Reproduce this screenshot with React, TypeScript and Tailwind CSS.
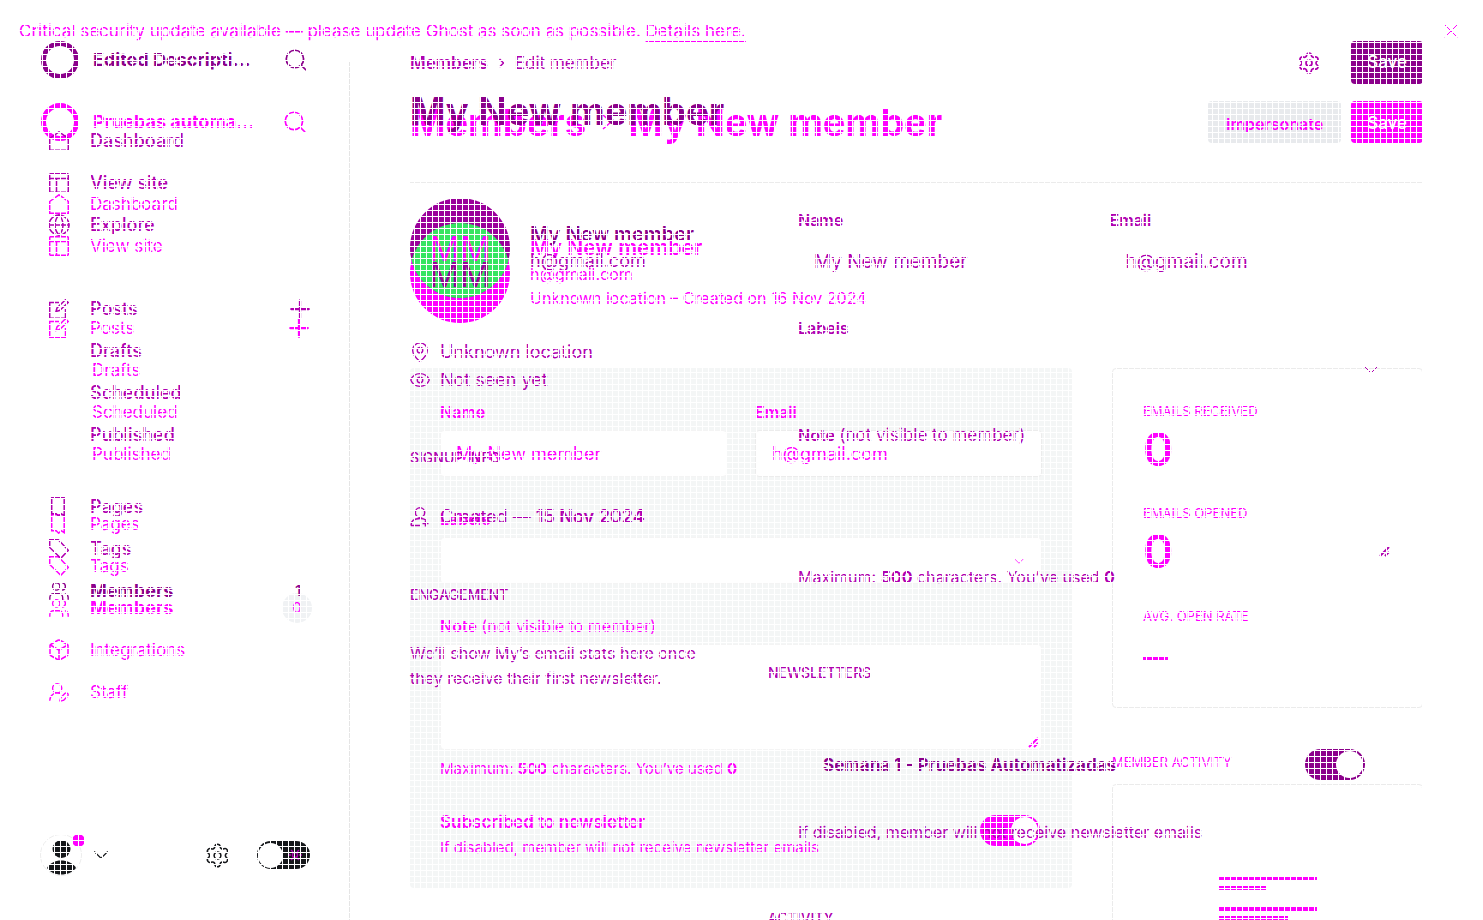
import React from "react";
import {
  Box,
  ChevronDown,
  Eye,
  Globe,
  MapPin,
  Plus,
  Search,
  Settings,
  UserRoundPen,
  Users,
  X,
} from "lucide-react";

const STROKE = 1.5;

function Glyph({ children }: { children: React.ReactNode }) {
  return (
    <svg
      viewBox="0 0 20 20"
      className="size-5 shrink-0"
      fill="none"
      stroke="currentColor"
      strokeWidth="1.5"
      aria-hidden="true"
    >
      {children}
    </svg>
  );
}

const HomeIcon = () => (
  <Glyph>
    <path d="M.7 7.5 10 .8l9.3 6.7v11.8H.7z" />
  </Glyph>
);
const SiteIcon = () => (
  <Glyph>
    <rect x=".7" y=".7" width="18.6" height="18.6" rx="1" />
    <path d="M.7 5.5h18.6M7.5 5.5v13.8" />
  </Glyph>
);
const PostIcon = () => (
  <Glyph>
    <path d="M10 3.500H.700v15.800h15.800V10" />
    <path d="m7 12.500 1-3.500L16.500.800l2.700 2.700-8.700 8z" />
  </Glyph>
);
const PageIcon = () => (
  <Glyph>
    <path d="M2.700.700h12.500v18l-3-2-2.500 2.500-2.500-2.500h-4.500z" />
  </Glyph>
);
const TagIcon = () => (
  <Glyph>
    <path d="M.7.7h8.600l10 10.600-7.500 8L.7 8.500z" />
  </Glyph>
);
const JoinedIcon = () => (
  <Glyph>
    <circle cx="10" cy="5.500" r="4.700" />
    <path d="M1 18.500c0-4.500 3.500-7 9-7 2.500 0 4.500.500 6 1.500M1 18.500h9M15.500 13.500v6M12.500 16.500h6" />
  </Glyph>
);

type Entry = { label: string; icon?: React.ReactNode; plus?: boolean; count?: string };

const postsGroup: Entry[] = [
  { label: "Posts", icon: <PostIcon />, plus: true },
  { label: "Drafts" },
  { label: "Scheduled" },
  { label: "Published" },
];

function NavRow({ entry, heavy, indent }: { entry: Entry; heavy: boolean; indent: string }) {
  const active = entry.label === "Members";
  const weight = active ? "font-bold text-[18px]" : heavy ? "font-medium" : "font-normal";
  return (
    <li className={`flex h-[42px] items-center ${active && heavy ? "text-[#8b008b]" : ""}`}>
      <span className="flex w-[41px] shrink-0">{entry.icon}</span>
      <a href="#" className={`${weight} ${entry.icon ? "" : indent}`}>
        {entry.label}
      </a>
      {entry.plus && (
        <button aria-label="New post" className="ml-auto mr-[-2px]">
          <Plus size={30} strokeWidth={1.8} />
        </button>
      )}
      {entry.count && (
        <span
          className={`ml-auto flex size-[30px] items-center justify-center rounded-full text-[15px] ${
            heavy ? "font-medium" : "bg-[#f0f2f4]"
          }`}
        >
          {entry.count}
        </span>
      )}
    </li>
  );
}

function NavGroup({
  entries,
  heavy = false,
  className = "",
  indent = "",
}: {
  entries: Entry[];
  heavy?: boolean;
  className?: string;
  indent?: string;
}) {
  return (
    <ul className={`pl-[49px] pr-[37px] leading-[24px] ${heavy ? "text-[18px]" : "text-[17px]"} ${className}`}>
      {entries.map((e) => (
        <NavRow key={e.label} entry={e} heavy={heavy} indent={indent} />
      ))}
    </ul>
  );
}

function SiteHeader({ name }: { name: string }) {
  return (
    <div className="flex h-[38px] items-center pl-[41px] pr-[41px]">
      <svg viewBox="0 0 38 38" className="size-[38px] shrink-0" fill="none" aria-hidden="true">
        <circle cx="19" cy="19" r="16.500" stroke="currentColor" strokeWidth="5" />
      </svg>
      <span className="ml-[14px] w-[164px] truncate text-[18px] font-bold leading-[28px]">{name}</span>
      <button aria-label="Search" className="ml-auto">
        <Search size={26} strokeWidth={1.6} />
      </button>
    </div>
  );
}

function Toggle({ id, className }: { id: string; className: string }) {
  return (
    <input
      id={id}
      type="checkbox"
      defaultChecked
      className={`block h-[31px] w-[60px] shrink-0 appearance-none rounded-full p-[2px] before:ml-auto before:block before:size-[27px] before:rounded-full before:bg-white before:content-[''] ${className}`}
    />
  );
}

function Handle() {
  return (
    <svg
      viewBox="0 0 12 12"
      className="mb-[2px] mr-[2px] size-3 self-end justify-self-end [grid-area:1/1]"
      stroke="currentColor"
      strokeWidth="2"
      aria-hidden="true"
    >
      <path d="M1 11 10 2M6 11l4-4" />
    </svg>
  );
}

function BasePage() {
  return (
    <div className="flex flex-col text-[#ff00ff] [grid-area:1/1]">
      <div className="flex h-[62px] items-center justify-between pl-[19px] pr-[20px]">
        <p className="text-[17px] leading-[24px]">
          Critical security update available — please update Ghost as soon as possible.{" "}
          <a href="#" className="underline underline-offset-4">
            Details here.
          </a>
        </p>
        <button aria-label="Close">
          <X size={24} strokeWidth={1} />
        </button>
      </div>
      <div className="flex grow">
        <nav className="w-[350px] shrink-0 border-r border-[#e5e5e5] pt-[41px]">
          <SiteHeader name="Pruebas automatizadas" />
          <NavGroup
            className="mt-[42px]"
            entries={[
              { label: "Dashboard", icon: <HomeIcon /> },
              { label: "View site", icon: <SiteIcon /> },
            ]}
          />
          <NavGroup className="mt-[40px]" indent="pl-[2px]" entries={postsGroup} />
          <NavGroup
            className="mt-[28px]"
            entries={[
              { label: "Pages", icon: <PageIcon /> },
              { label: "Tags", icon: <TagIcon /> },
              { label: "Members", icon: <Users size={22} strokeWidth={STROKE} className="-ml-px" />, count: "0" },
              { label: "Integrations", icon: <Box size={24} strokeWidth={STROKE} className="-ml-[2px]" /> },
              { label: "Staff", icon: <UserRoundPen size={22} strokeWidth={STROKE} className="-ml-px" /> },
            ]}
          />
        </nav>
        <main className="min-w-0 grow px-[60px]">
          <header className="flex items-center border-b border-[#ebebeb] py-[39px]">
            <h1 className="flex items-center gap-[16px] text-[38px] font-bold leading-[42px]">
              Members
              <svg viewBox="0 0 10 16" className="h-4 w-[10px]" fill="none" stroke="currentColor" aria-hidden="true">
                <path d="m1 1 8 7-8 7" strokeWidth="1.5" />
              </svg>
              My New member
            </h1>
            <button className="ml-auto h-[42px] rounded-[4px] bg-[#e8eaed] px-[18px] pt-[3px] text-[16px] font-semibold">
              Impersonate
            </button>
            <button className="ml-[10px] h-[42px] rounded-[4px] bg-[#ff00ff] px-4 pt-[3px] text-[17px] font-medium text-white">
              Save
            </button>
          </header>
          <div className="mt-[40px] flex gap-[20px]">
            <div className="size-[100px] rounded-full bg-[#ff00ff]" />
            <div className="pt-[11px]">
              <h2 className="text-[21px] font-semibold leading-[28px]">My New member</h2>
              <p className="text-[16px] leading-[24px]">h@gmail.com</p>
              <p className="text-[16px] leading-[24px]">Unknown location – Created on 16 Nov 2024</p>
            </div>
          </div>
          <div className="mt-[45px] grid grid-cols-[1fr_311px] items-start gap-[40px]">
            <form className="rounded-[4px] bg-[#f4f6f6] px-[30px] pb-[28px] pt-[32px] text-[16px] leading-[24px]">
              <div className="grid grid-cols-2 gap-[28px]">
                <div>
                  <label htmlFor="name" className="block font-semibold">
                    Name
                  </label>
                  <input
                    id="name"
                    defaultValue="My New member"
                    className="mt-[6px] h-[47px] w-full rounded-[4px] border border-[#f4f4f4] bg-white px-[15px] text-[18px]"
                  />
                </div>
                <div>
                  <label htmlFor="email" className="block font-semibold">
                    Email
                  </label>
                  <input
                    id="email"
                    defaultValue="h@gmail.com"
                    className="mt-[6px] h-[47px] w-full rounded-[4px] border border-[#ececec] bg-white px-[16px] text-[18px]"
                  />
                </div>
              </div>
              <label htmlFor="labels" className="mt-[30px] block font-semibold">
                Labels
              </label>
              <div className="mt-[6px] grid">
                <input
                  id="labels"
                  className="h-[47px] w-full rounded-[4px] border border-[#f4f4f4] bg-white px-[15px] text-[18px] [grid-area:1/1]"
                />
                <ChevronDown size={18} strokeWidth={1} className="mr-[14px] self-center justify-self-end [grid-area:1/1]" />
              </div>
              <label htmlFor="note" className="mt-[30px] block">
                <span className="font-semibold">Note</span> (not visible to member)
              </label>
              <div className="mt-[6px] grid">
                <textarea
                  id="note"
                  className="h-[106px] w-full resize-none rounded-[4px] border border-[#f4f4f4] bg-white p-[15px] [grid-area:1/1]"
                />
                <Handle />
              </div>
              <p className="mt-[7px] text-[15px]">
                Maximum: <b>500</b> characters. You’ve used <b>0</b>
              </p>
              <div className="mt-[27px] flex justify-between">
                <div>
                  <label htmlFor="subscribed" className="block text-[17px] font-semibold leading-[28px]">
                    Subscribed to newsletter
                  </label>
                  <p className="text-[15px]">If disabled, member will not receive newsletter emails</p>
                </div>
                <Toggle id="subscribed" className="mr-[2px] mt-[7px] bg-[#ff00ff]" />
              </div>
            </form>
            <aside>
              <section className="h-[340px] rounded-[4px] border border-[#ebebeb] px-[30px] pt-[32px] text-[13px] leading-[20px]">
                <h3>EMAILS RECEIVED</h3>
                <p className="text-[46px] font-semibold leading-[56px]">0</p>
                <h3 className="mt-[26px]">EMAILS OPENED</h3>
                <p className="text-[46px] font-semibold leading-[56px]">0</p>
                <h3 className="mt-[27px]">AVG. OPEN RATE</h3>
                <div className="mt-[31px] h-[3px] w-[25px] bg-current" />
              </section>
              <h3 className="mt-[44px] text-[13px] leading-[20px]">MEMBER ACTIVITY</h3>
              <section className="mt-[12px] h-[340px] rounded-[4px] border border-[#ebebeb] pl-[106px] pt-[92px]">
                <div className="h-[3px] w-[98px] bg-current" />
                <div className="mt-[6px] h-[4px] w-[47px] bg-current" />
                <div className="mt-[17px] h-[4px] w-[98px] bg-current" />
                <div className="mt-[5px] h-[4px] w-[69px] bg-current" />
              </section>
            </aside>
          </div>
        </main>
      </div>
    </div>
  );
}

function MemberAvatar() {
  return (
    <svg viewBox="0 0 100 125" className="h-[125px] w-[100px] shrink-0" aria-hidden="true">
      <defs>
        <clipPath id="upper">
          <circle cx="50" cy="50" r="50" />
        </clipPath>
      </defs>
      <circle cx="50" cy="50" r="50" fill="#9a009a" />
      <circle cx="50" cy="75" r="50" fill="#37e561" clipPath="url(#upper)" />
      <g className="text-[34px]" textAnchor="middle">
        <text x="50" y="63" fill="#ff00ff">
          MM
        </text>
        <text x="50" y="89" fill="#9a009a">
          MM
        </text>
      </g>
    </svg>
  );
}

function AccountBar() {
  return (
    <div className="mt-auto flex h-[44px] items-center pl-[40px] pr-[40px] text-[#15171a]">
      <div className="relative size-[42px] shrink-0">
        <svg viewBox="0 0 42 42" className="size-[42px]" aria-hidden="true">
          <circle cx="21" cy="21" r="20.5" fill="#fff" stroke="#ededed" />
          <circle cx="21.500" cy="15" r="9" fill="currentColor" />
          <path d="M7 34c3-5 8-7.500 14-7.500S33.500 29 36 34c-3.500 4.500-9 6.500-15 6.500S10.500 38.500 7 34z" fill="currentColor" />
        </svg>
        <span className="absolute -right-[3px] top-0 size-[13px] rounded-full bg-[#ff00ff]" />
      </div>
      <button aria-label="Account menu" className="ml-[6px]">
        <ChevronDown size={26} strokeWidth={1} />
      </button>
      <button aria-label="Settings" className="ml-auto">
        <Settings size={27} strokeWidth={1.4} />
      </button>
      <label htmlFor="night" className="ml-[26px] flex h-[28px] w-[53px] items-center justify-between rounded-full bg-[#15171a] p-px pr-[8px]">
        <input
          id="night"
          type="checkbox"
          aria-label="Night shift"
          className="size-[25px] appearance-none rounded-full bg-white"
        />
        <svg viewBox="0 0 14 14" className="size-[14px]" stroke="#b000b0" strokeWidth="1.5" fill="none" aria-hidden="true">
          <circle cx="7" cy="7" r="2.5" />
          <path d="M0 7h3M11 7h3M3 2l2 2M11 2 9 4M3 12l2-2M11 12l-2-2" />
        </svg>
      </label>
    </div>
  );
}

function RevisedPage() {
  return (
    <div className="flex text-[#b000b0] [grid-area:1/1]">
      <nav className="flex h-screen w-[350px] shrink-0 flex-col pb-[43px] pt-[41px]">
        <div className="text-[#8b008b]">
          <SiteHeader name="Edited Description Blog" />
        </div>
        <NavGroup
          heavy
          className="mt-[41px]"
          entries={[
            { label: "Dashboard", icon: <HomeIcon /> },
            { label: "View site", icon: <SiteIcon /> },
            { label: "Explore", icon: <Globe size={24} strokeWidth={STROKE} className="-ml-[2px]" /> },
          ]}
        />
        <NavGroup heavy className="mt-[42px]" entries={postsGroup} />
        <NavGroup
          heavy
          className="mt-[30px]"
          entries={[
            { label: "Pages", icon: <PageIcon /> },
            { label: "Tags", icon: <TagIcon /> },
            { label: "Members", icon: <Users size={22} strokeWidth={STROKE} className="-ml-px" />, count: "1" },
          ]}
        />
        <AccountBar />
      </nav>
      <main className="min-w-0 grow px-[60px] pt-[41px]">
        <header className="flex h-[43px] items-center">
          <nav className="flex items-center gap-[10px] text-[17px] leading-[24px]">
            <a href="#" className="font-semibold">
              Members
            </a>
            <svg viewBox="0 0 6 10" className="h-[10px] w-[7px]" fill="none" stroke="currentColor" strokeWidth="1.5" aria-hidden="true">
              <path d="m1 1 4 4-4 4" />
            </svg>
            <span>Edit member</span>
          </nav>
          <button aria-label="Member settings" className="ml-auto">
            <Settings size={24} strokeWidth={1.7} />
          </button>
          <button className="ml-[30px] h-[43px] rounded-[4px] bg-[#8b008b] px-4 text-[17px] font-medium text-white">
            Save
          </button>
        </header>
        <h1 className="mt-[5px] text-[38px] font-bold leading-[44px] text-[#8b008b]">My New member</h1>
        <div className="mt-[65px] grid grid-cols-[318px_1fr] gap-[40px]">
          <div className="text-[18px] leading-[24px]">
            <div className="flex h-[100px] items-start gap-[20px]">
              <MemberAvatar />
              <div className="pt-[22px]">
                <h2 className="text-[20px] font-semibold leading-[28px] text-[#8b008b]">My New member</h2>
                <p className="leading-[26px]">h@gmail.com</p>
              </div>
            </div>
            <p className="mt-[42px] flex items-center gap-[10px]">
              <MapPin size={22} strokeWidth={STROKE} className="-mx-px" />
              Unknown location
            </p>
            <p className="mt-[4px] flex items-center gap-[10px]">
              <Eye size={22} strokeWidth={STROKE} className="-mx-px" />
              Not seen yet
            </p>
            <h3 className="mt-[56px] text-[14px] font-medium leading-[20px]">SIGNUP INFO</h3>
            <p className="mt-[37px] flex items-center gap-[10px]">
              <JoinedIcon />
              <span>
                Created — <span className="font-semibold">15 Nov 2024</span>
              </span>
            </p>
            <h3 className="mt-[56px] text-[14px] font-medium leading-[20px]">ENGAGEMENT</h3>
            <p className="mt-[36px] text-[16px] leading-[25px]">
              We’ll show My’s email stats here once they receive their first newsletter.
            </p>
          </div>
          <form className="pt-[10px] text-[16px] leading-[24px]">
            <div className="px-[30px]">
              <div className="grid grid-cols-2 gap-[28px]">
                <div>
                  <label htmlFor="name-new" className="block font-semibold">
                    Name
                  </label>
                  <input
                    id="name-new"
                    defaultValue="My New member"
                    className="mt-[6px] h-[47px] w-full bg-transparent px-[16px] text-[19px]"
                  />
                </div>
                <div>
                  <label htmlFor="email-new" className="block font-semibold">
                    Email
                  </label>
                  <input
                    id="email-new"
                    defaultValue="h@gmail.com"
                    className="mt-[6px] h-[47px] w-full bg-transparent px-[16px] text-[19px]"
                  />
                </div>
              </div>
              <label htmlFor="labels-new" className="mt-[31px] block font-semibold">
                Labels
              </label>
              <div className="mt-[6px] grid">
                <input
                  id="labels-new"
                  className="h-[47px] w-full bg-transparent px-[16px] text-[19px] [grid-area:1/1]"
                />
                <ChevronDown size={24} strokeWidth={1} className="mr-[10px] self-center justify-self-end [grid-area:1/1]" />
              </div>
              <label htmlFor="note-new" className="mt-[30px] block">
                <span className="font-semibold">Note</span> <span className="text-[17px]">(not visible to member)</span>
              </label>
              <div className="mt-[6px] grid">
                <textarea
                  id="note-new"
                  className="h-[106px] w-full resize-none bg-transparent p-[16px] [grid-area:1/1]"
                />
                <Handle />
              </div>
              <p className="mt-[6px]">
                Maximum: <b>500</b> characters. You’ve used <b>0</b>
              </p>
            </div>
            <h3 className="mt-[74px] text-[14px] font-medium leading-[20px]">NEWSLETTERS</h3>
            <div className="mt-[66px] flex items-center justify-between pl-[55px] pr-[58px]">
              <label htmlFor="semana" className="text-[17px] font-bold text-[#8b008b]">
                Semana 1 - Pruebas Automatizadas
              </label>
              <Toggle id="semana" className="bg-[#8b008b]" />
            </div>
            <p className="mt-[40px] px-[30px]">If disabled, member will not receive newsletter emails</p>
            <h3 className="mt-[64px] text-[14px] font-medium leading-[20px]">ACTIVITY</h3>
          </form>
        </div>
      </main>
    </div>
  );
}

export default function App() {
  return (
    <div className="grid h-screen overflow-hidden bg-white font-['Inter',sans-serif]">
      <BasePage />
      <RevisedPage />
      <div className="pointer-events-none relative bg-[linear-gradient(to_right,#fff_1px,transparent_1px),linear-gradient(to_bottom,#fff_1px,transparent_1px)] bg-[size:6px_6px] [grid-area:1/1]" />
    </div>
  );
}
